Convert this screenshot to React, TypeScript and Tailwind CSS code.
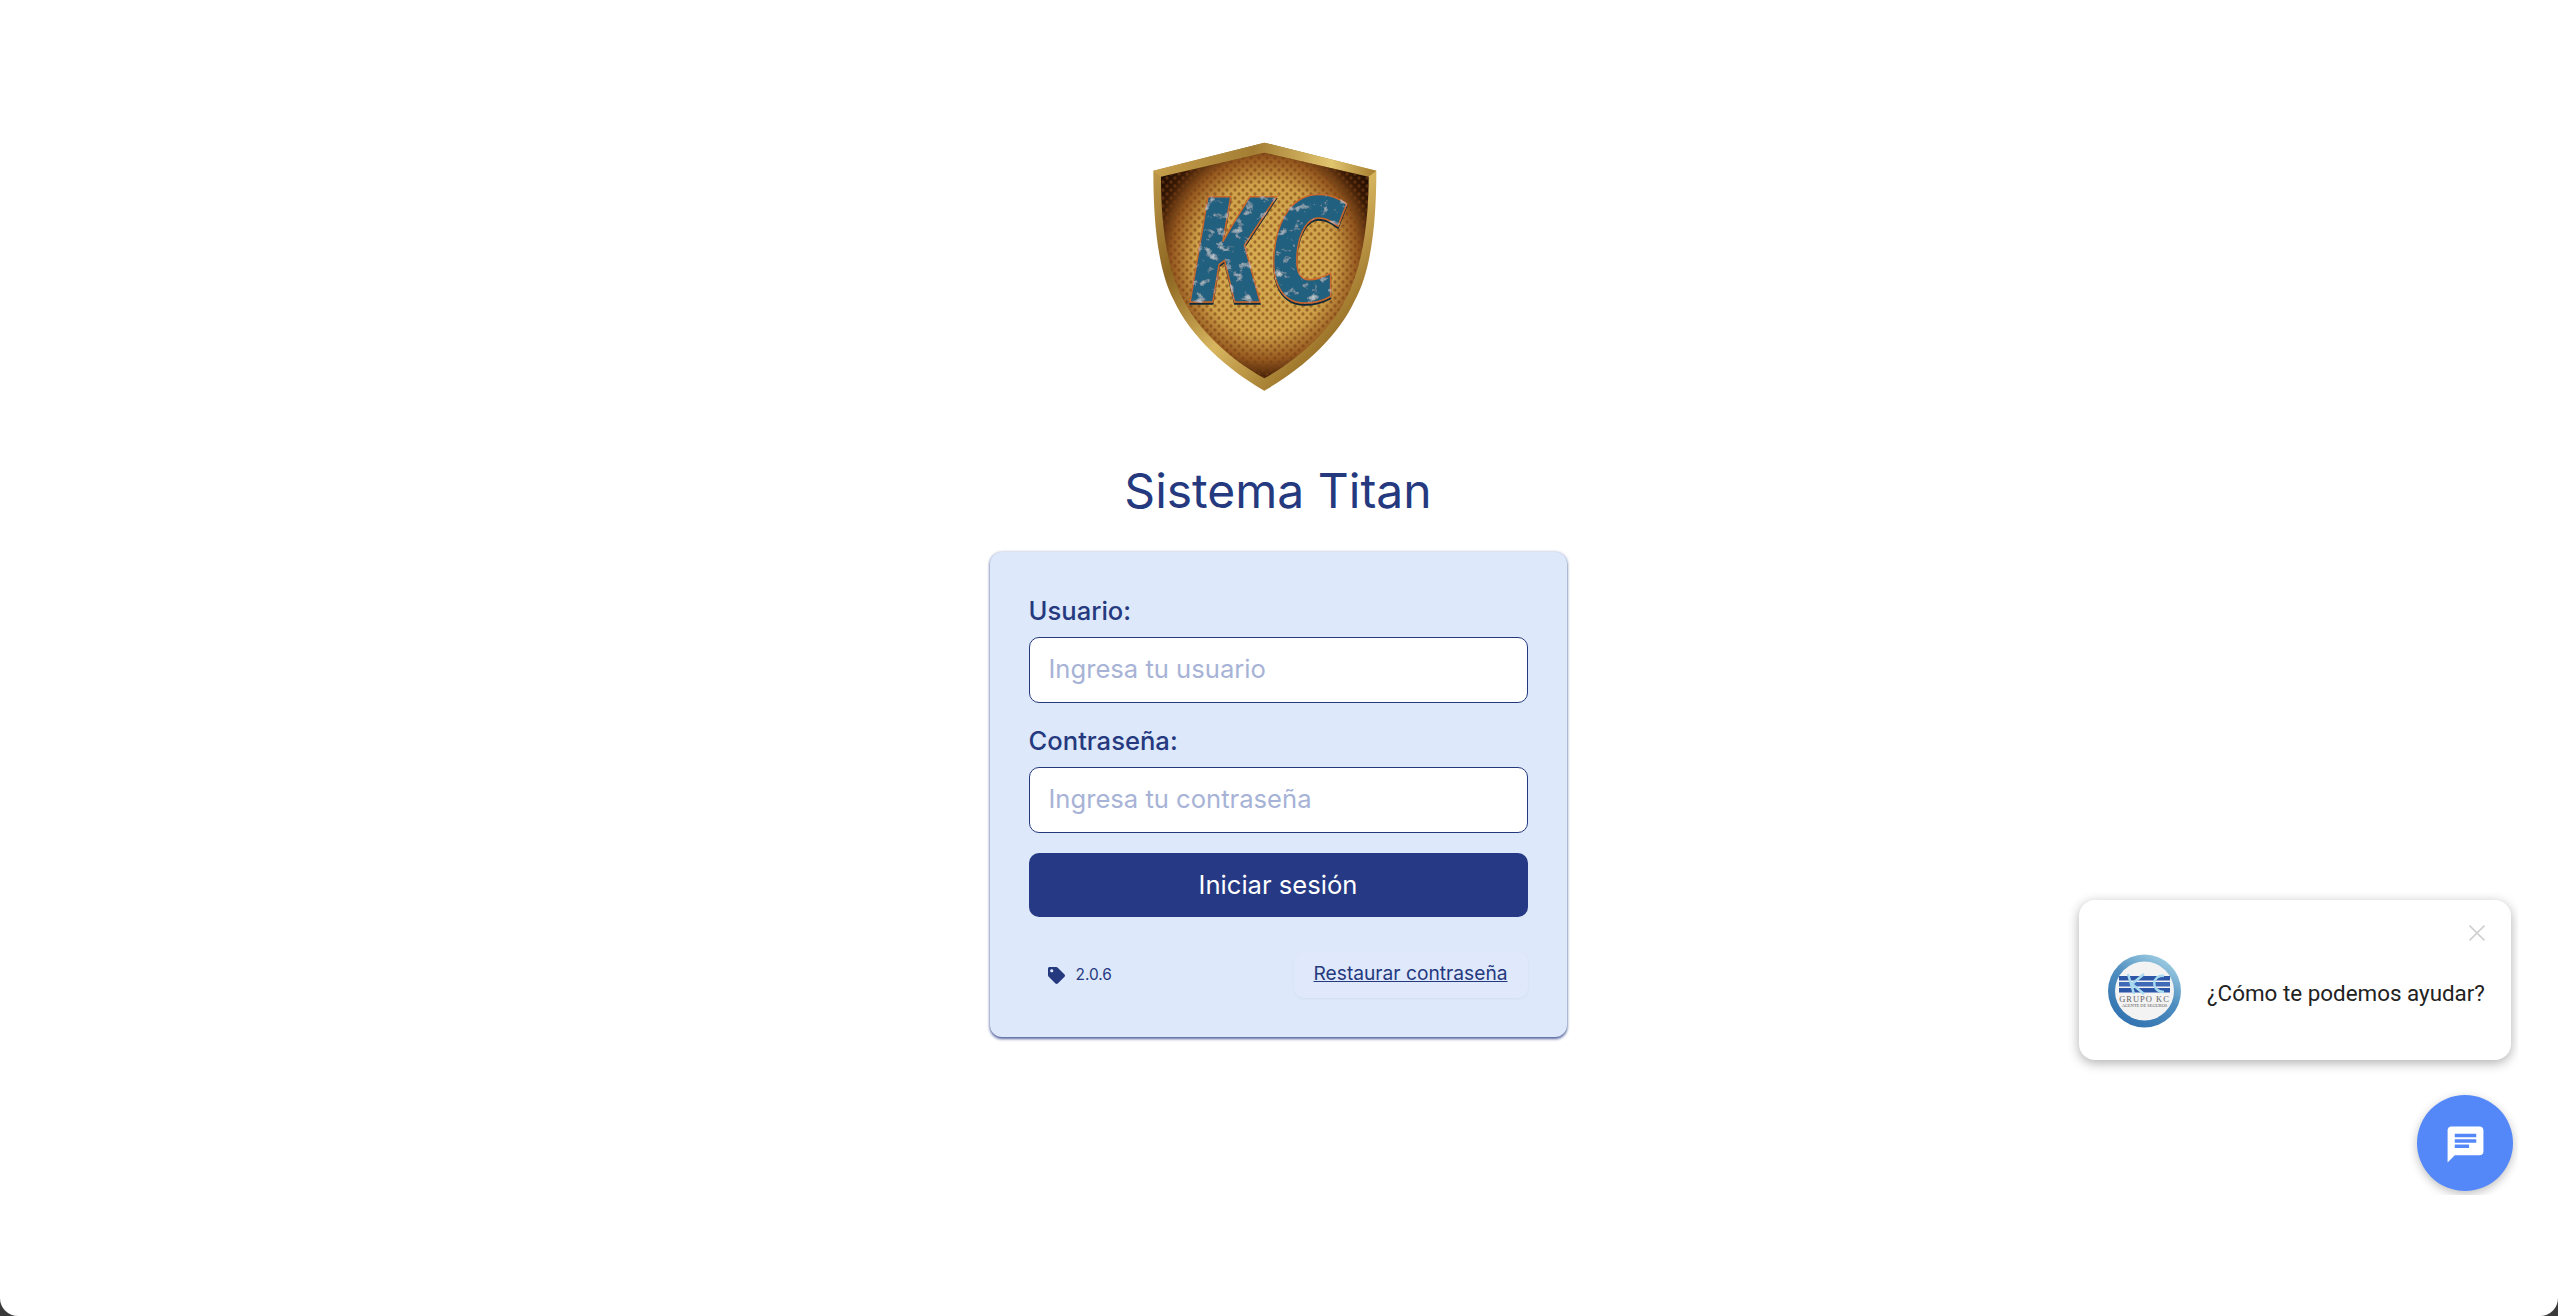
import { FaTag } from "react-icons/fa";

const KcShield = () => (
  <svg width="355" height="300" viewBox="0 0 1065 900" className="block">
    <defs>
      <linearGradient id="rim" x1="0" y1="0" x2="1" y2="1">
        <stop offset="0" stopColor="#c9a455" />
        <stop offset="0.3" stopColor="#8d6620" />
        <stop offset="0.55" stopColor="#d8b660" />
        <stop offset="0.8" stopColor="#9a7228" />
        <stop offset="1" stopColor="#7a5516" />
      </linearGradient>
      <linearGradient id="rimTop" x1="0" y1="0" x2="1" y2="0">
        <stop offset="0" stopColor="#c6a04c" />
        <stop offset="0.45" stopColor="#a37d33" />
        <stop offset="0.8" stopColor="#e2c56f" />
        <stop offset="1" stopColor="#a47c2e" />
      </linearGradient>
      <radialGradient id="plate" cx="0.5" cy="0.47" r="0.64">
        <stop offset="0" stopColor="#d8ae52" />
        <stop offset="0.52" stopColor="#cfa249" />
        <stop offset="0.7" stopColor="#95591f" />
        <stop offset="0.84" stopColor="#3a1a05" />
        <stop offset="1" stopColor="#140701" />
      </radialGradient>
      <pattern id="dots" width="24" height="24" patternUnits="userSpaceOnUse">
        <circle cx="6" cy="6" r="5" fill="#7a3d12" fillOpacity="0.6" />
        <circle cx="18" cy="18" r="5" fill="#7a3d12" fillOpacity="0.6" />
      </pattern>
      <filter id="worn" x="-5%" y="-5%" width="110%" height="115%">
        <feOffset in="SourceAlpha" dy="6" result="drop" />
        <feFlood floodColor="#0a2a38" result="dark" />
        <feComposite in="dark" in2="drop" operator="in" result="depth" />
        <feTurbulence type="fractalNoise" baseFrequency="0.035 0.04" numOctaves="4" seed="11" result="noise" />
        <feColorMatrix
          in="noise"
          type="matrix"
          values="0 0 0 0 0.55  0 0 0 0 0.63  0 0 0 0 0.66  0 0 0 3 -1.75"
          result="flecks"
        />
        <feComposite in="flecks" in2="SourceAlpha" operator="in" result="clipped" />
        <feMerge>
          <feMergeNode in="depth" />
          <feMergeNode in="SourceGraphic" />
          <feMergeNode in="clipped" />
        </feMerge>
      </filter>
    </defs>
    <path
      d="M490 68 L826 152 C826 300 812 450 762 540 C712 650 600 750 490 812 C380 750 268 650 218 540 C170 450 157 300 157 152 Z"
      fill="url(#rim)"
    />
    <path d="M490 68 L826 152 L803 170 L490 98 L180 170 L157 152 Z" fill="url(#rimTop)" />
    <path
      d="M490 98 L803 170 C803 300 785 440 735 535 C690 630 590 720 490 775 C390 720 290 630 245 535 C195 440 180 300 180 170 Z"
      fill="url(#plate)"
    />
    <path
      d="M490 98 L803 170 C803 300 785 440 735 535 C690 630 590 720 490 775 C390 720 290 630 245 535 C195 440 180 300 180 170 Z"
      fill="url(#dots)"
    />
    <text
      x="262"
      y="546"
      textLength="462"
      lengthAdjust="spacingAndGlyphs"
      fontFamily="'Open Sans', sans-serif"
      fontWeight="800"
      fontStyle="italic"
      fontSize="444"
      fill="#22607f"
      stroke="#c9672a"
      strokeWidth="5"
      filter="url(#worn)"
    >
      KC
    </text>
  </svg>
);

const GrupoAvatar = () => (
  <svg width="73" height="74" viewBox="0 0 73 74" className="block shrink-0">
    <defs>
      <linearGradient id="ring" x1="0.8" y1="0" x2="0.2" y2="1">
        <stop offset="0" stopColor="#a6d3e6" />
        <stop offset="0.45" stopColor="#4f8fc0" />
        <stop offset="1" stopColor="#2f6fae" />
      </linearGradient>
    </defs>
    <circle cx="36.5" cy="37" r="36.5" fill="url(#ring)" />
    <circle cx="36.5" cy="37" r="29.5" fill="#f3f3f3" />
    <rect x="11" y="22" width="51" height="4.5" fill="#2f57a8" />
    <rect x="11" y="28" width="51" height="4.5" fill="#3f6ab8" />
    <rect x="11" y="34" width="51" height="4.5" fill="#2f57a8" />
    <path d="M20 20 L26 40 M36 20 L24 30 L36 40 M56 22 C44 20 42 38 56 38" fill="none" stroke="#a8daf0" strokeWidth="2.5" />
    <text x="36.5" y="47.5" textAnchor="middle" fontFamily="'Liberation Serif', serif" fontSize="8.5" fill="#666" letterSpacing="1">
      GRUPO KC
    </text>
    <text x="36.5" y="53" textAnchor="middle" fontFamily="'Liberation Serif', serif" fontSize="4.4" fill="#555">
      AGENTE DE SEGUROS
    </text>
  </svg>
);

const ChatWidget = () => (
  <div className="absolute right-[40px] bottom-[121px] w-[460px] h-[320px] overflow-hidden flex flex-col items-end justify-end pr-[5px] pb-[4px] font-['Roboto',sans-serif]">
    <div className="relative w-[432px] h-[160px] mr-[2px] mb-[35px] flex items-center bg-white rounded-[16px] shadow-[0_3px_12px_rgba(0,0,0,0.32)] pl-[29px] pt-[22px]">
      <button className="absolute top-[25px] right-[26px] text-[#d0d0d0]">
        <svg width="16" height="16" viewBox="0 0 16 16" className="block">
          <path d="M0.5 0.5 L15.5 15.5 M15.5 0.5 L0.5 15.5" stroke="currentColor" strokeWidth="1.6" />
        </svg>
      </button>
      <GrupoAvatar />
      <p className="ml-[26px] mt-[3px] text-[22.4px] leading-[30px] text-[#222222] whitespace-nowrap">¿Cómo te podemos ayudar?</p>
    </div>
    <button className="w-[96px] h-[96px] pt-[3px] rounded-full bg-[#5488f8] shadow-[0_3px_10px_rgba(0,0,0,0.25)] flex items-center justify-center">
      <svg width="43" height="43" viewBox="0 0 24 24" fill="#ffffff" className="block">
        <path d="M20 2H4c-1.1 0-1.99.9-1.99 2L2 22l4-4h14c1.1 0 2-.9 2-2V4c0-1.1-.9-2-2-2zM6 9h12v2H6V9zm8 5H6v-2h8v2zm4-6H6V6h12v2z" />
      </svg>
    </button>
  </div>
);

export default function App() {
  return (
    <div className="h-[1316px] bg-[#3a3a3a] overflow-hidden font-['Inter',sans-serif]">
      <div className="relative h-full bg-white rounded-b-[18px] flex flex-col items-center pt-[120px] pr-[2px]">
        <KcShield />
        <h1 className="mt-[39px] mb-[29px] text-[48px] leading-[64px] font-normal text-[#25397f]">Sistema Titan</h1>
        <div className="w-[577px] rounded-[12px] bg-[#dde8fa] px-[39px] pt-[39px] pb-[39px] shadow-[0_2px_3px_0_rgba(37,57,132,0.75),0_0_3px_0_rgba(37,57,132,0.35)]">
          <form>
            <label className="block mb-[8px] pt-[2px] text-[25.6px] leading-[36px] font-medium text-[#25397f]">Usuario:</label>
            <input
              type="text"
              placeholder="Ingresa tu usuario"
              className="block w-full h-[66px] px-[19px] pb-[3px] rounded-[10px] border-[1.5px] border-[#25397f] bg-white text-[25.6px] placeholder:text-[#a7b3d6]"
            />
            <label className="block mt-[18px] mb-[8px] pt-[2px] text-[25.6px] leading-[36px] font-medium text-[#25397f]">Contraseña:</label>
            <input
              type="password"
              placeholder="Ingresa tu contraseña"
              className="block w-full h-[66px] px-[19px] pb-[3px] rounded-[10px] border-[1.5px] border-[#25397f] bg-white text-[25.6px] placeholder:text-[#a7b3d6]"
            />
            <button type="button" className="block w-full h-[64px] mt-[20px] rounded-[10px] bg-[#253984] text-white text-[25.6px]">
              Iniciar sesión
            </button>
          </form>
          <div className="flex items-center justify-between mt-[35px]">
            <div className="flex items-center gap-[11px] pl-[19px] text-[#25397f]">
              <FaTag className="w-[17px] h-[17px]" />
              <span className="text-[15.4px] leading-[20px]">2.0.6</span>
            </div>
            <a className="block h-[46px] px-[20px] pb-[2px] rounded-[10px] bg-[#dfe9fb] shadow-[0_1px_3px_rgba(37,57,132,0.05)] text-[19.2px] leading-[42px] text-[#25397f] underline">
              Restaurar contraseña
            </a>
          </div>
        </div>
        <ChatWidget />
      </div>
    </div>
  );
}
